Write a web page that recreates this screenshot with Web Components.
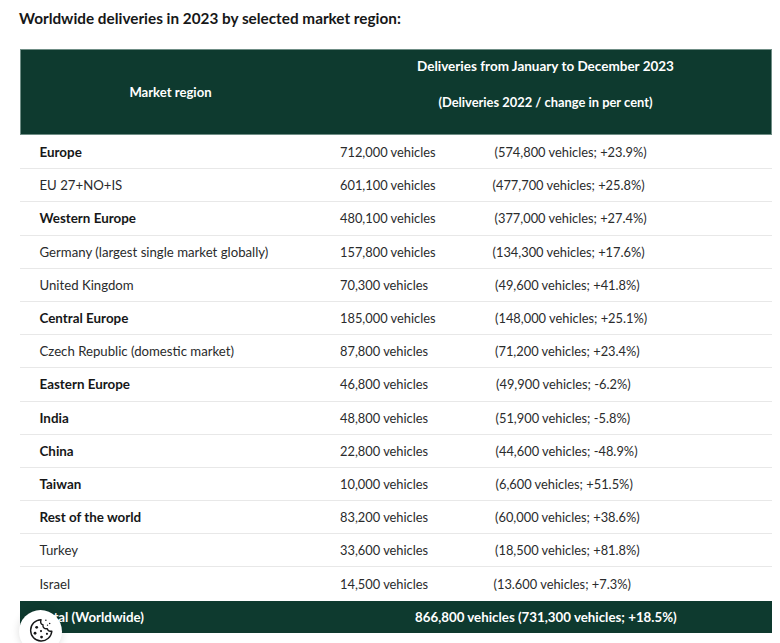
<!DOCTYPE html>
<html>
<head>
<meta charset="utf-8">
<title>Deliveries</title>
<style>
  html, body { margin: 0; padding: 0; background: #fff; overflow: hidden; }
  body { height: 643px; font-family: "Lato", "Liberation Sans", sans-serif; color: #2a2b2c; }
</style>
</head>
<body>
<deliveries-page>
  <span slot="title">Worldwide deliveries in 2023 by selected market region:</span>
  <deliveries-head>
    <span slot="region">Market region</span>
    <span slot="main">Deliveries from January to December 2023</span>
    <span slot="sub">(Deliveries 2022 / change in per cent)</span>
  </deliveries-head>
  <delivery-row strong shift="154.5">Europe<span slot="count">712,000 vehicles</span><span slot="change">(574,800 vehicles; +23.9%)</span></delivery-row>
  <delivery-row shift="152.5">EU 27+NO+IS<span slot="count">601,100 vehicles</span><span slot="change">(477,700 vehicles; +25.8%)</span></delivery-row>
  <delivery-row strong shift="154.5">Western Europe<span slot="count">480,100 vehicles</span><span slot="change">(377,000 vehicles; +27.4%)</span></delivery-row>
  <delivery-row shift="152.5">Germany (largest single market globally)<span slot="count">157,800 vehicles</span><span slot="change">(134,300 vehicles; +17.6%)</span></delivery-row>
  <delivery-row shift="155">United Kingdom<span slot="count">70,300 vehicles</span><span slot="change">(49,600 vehicles; +41.8%)</span></delivery-row>
  <delivery-row strong shift="155">Central Europe<span slot="count">185,000 vehicles</span><span slot="change">(148,000 vehicles; +25.1%)</span></delivery-row>
  <delivery-row shift="155">Czech Republic (domestic market)<span slot="count">87,800 vehicles</span><span slot="change">(71,200 vehicles; +23.4%)</span></delivery-row>
  <delivery-row strong shift="156">Eastern Europe<span slot="count">46,800 vehicles</span><span slot="change">(49,900 vehicles; -6.2%)</span></delivery-row>
  <delivery-row strong shift="155.5">India<span slot="count">48,800 vehicles</span><span slot="change">(51,900 vehicles; -5.8%)</span></delivery-row>
  <delivery-row strong shift="155.5">China<span slot="count">22,800 vehicles</span><span slot="change">(44,600 vehicles; -48.9%)</span></delivery-row>
  <delivery-row strong shift="155.5">Taiwan<span slot="count">10,000 vehicles</span><span slot="change">(6,600 vehicles; +51.5%)</span></delivery-row>
  <delivery-row strong shift="155">Rest of the world<span slot="count">83,200 vehicles</span><span slot="change">(60,000 vehicles; +38.6%)</span></delivery-row>
  <delivery-row shift="155">Turkey<span slot="count">33,600 vehicles</span><span slot="change">(18,500 vehicles; +81.8%)</span></delivery-row>
  <delivery-row shift="153.5" last>Israel<span slot="count">14,500 vehicles</span><span slot="change">(13.600 vehicles; +7.3%)</span></delivery-row>
  <deliveries-total>
    <span slot="label">Total (Worldwide)</span>
    <span slot="value">866,800 vehicles (731,300 vehicles; +18.5%)</span>
  </deliveries-total>
</deliveries-page>
<cookie-button></cookie-button>

<script>
class DeliveriesPage extends HTMLElement {
  constructor() {
    super();
    this.attachShadow({ mode: 'open' });
    this.shadowRoot.innerHTML = `
      <style>
        :host { display: block; padding: 9px 8px 0 20px; font-size: 13px; }
        h2 { margin: 0 0 23px -1px; font-size: 15.3px; line-height: 18px; font-weight: 700; color: #161718; }
      </style>
      <h2><slot name="title"></slot></h2>
      <slot></slot>
    `;
  }
}

class DeliveriesHead extends HTMLElement {
  constructor() {
    super();
    this.attachShadow({ mode: 'open' });
    this.shadowRoot.innerHTML = `
      <style>
        :host {
          display: grid;
          grid-template-columns: 299px 1fr;
          height: 84px;
          box-sizing: border-box;
          margin: 0 1px 2px;
          background: #0e3a2f;
          outline: 1px solid #6f8d85;
          color: #fff;
          font-weight: 700;
          align-items: center;
          text-align: center;
        }
        .region { font-size: 13.1px; }
        .right { display: flex; flex-direction: column; gap: 18px; padding-bottom: 16px; }
        .right div { line-height: 18px; }
        .main { font-size: 13.5px; }
        .sub { font-size: 12.9px; }
      </style>
      <div class="region"><slot name="region"></slot></div>
      <div class="right">
        <div class="main"><slot name="main"></slot></div>
        <div class="sub"><slot name="sub"></slot></div>
      </div>
    `;
  }
}

class DeliveryRow extends HTMLElement {
  constructor() {
    super();
    this.attachShadow({ mode: 'open' });
    this.shadowRoot.innerHTML = `
      <style>
        :host {
          display: grid;
          grid-template-columns: 300.5px 1fr;
          height: 33.2px;
          box-sizing: border-box;
          align-items: center;
          border-bottom: 1.5px solid #e8e8e8;
          padding-left: 19.5px;
          line-height: 18px;
        }
        :host([last]) { border-bottom: 0; }
        .name { font-size: 13.2px; }
        :host([strong]) .name { font-weight: 700; font-size: 13.4px; color: #161718; }
        .vals { display: flex; font-size: 12.85px; }
        .count { flex: none; }
      </style>
      <div class="name"><slot></slot></div>
      <div class="vals">
        <div class="count"><slot name="count"></slot></div>
        <div class="change"><slot name="change"></slot></div>
      </div>
    `;
  }

  connectedCallback() {
    const count = this.shadowRoot.querySelector('.count');
    count.style.width = this.getAttribute('shift') + 'px';
  }
}

class DeliveriesTotal extends HTMLElement {
  constructor() {
    super();
    this.attachShadow({ mode: 'open' });
    this.shadowRoot.innerHTML = `
      <style>
        :host {
          display: grid;
          grid-template-columns: 375.5px 1fr;
          height: 32px;
          align-items: center;
          background: #0e3a2f;
          color: #fff;
          font-weight: 700;
          font-size: 13.3px;
          padding-left: 19.5px;
        }
      </style>
      <div><slot name="label"></slot></div>
      <div><slot name="value"></slot></div>
    `;
  }
}

class CookieButton extends HTMLElement {
  constructor() {
    super();
    this.attachShadow({ mode: 'open' });
    this.shadowRoot.innerHTML = `
      <style>
        :host {
          position: fixed;
          left: 19px;
          top: 610px;
          width: 43px;
          height: 43px;
          border-radius: 50%;
          background: #fff;
          box-shadow: 0 0 8px rgba(0,0,0,0.14);
          display: flex;
          align-items: center;
          justify-content: center;
        }
        svg { width: 26px; height: 26px; margin-top: -3px; }
      </style>
      <svg viewBox="0 0 24 24" fill="none" stroke="#161718" stroke-width="1.3" stroke-linecap="round" stroke-linejoin="round">
        <path d="M12 2.500a9.800 9.800 0 1 0 10 10.500c-2 .6-3.600-.3-4.200-2.300-2.500.5-4.300-1-4-3.500-1.800-.2-2.600-1.900-1.800-4.700z"/>
        <circle cx="8" cy="9.500" r="1.300" fill="#161718" stroke="none"/>
        <circle cx="6.500" cy="15" r="1.300" fill="#161718" stroke="none"/>
        <circle cx="12" cy="13" r="1" fill="#161718" stroke="none"/>
        <circle cx="12.500" cy="18.500" r="1.300" fill="#161718" stroke="none"/>
        <circle cx="17.500" cy="15.500" r="1" fill="#161718" stroke="none"/>
        <circle cx="16.500" cy="3" r=".7" fill="#161718" stroke="none"/>
        <circle cx="20" cy="6" r=".7" fill="#161718" stroke="none"/>
        <circle cx="18" cy="7.500" r=".6" fill="#161718" stroke="none"/>
      </svg>
    `;
  }
}

customElements.define('deliveries-page', DeliveriesPage);
customElements.define('deliveries-head', DeliveriesHead);
customElements.define('delivery-row', DeliveryRow);
customElements.define('deliveries-total', DeliveriesTotal);
customElements.define('cookie-button', CookieButton);
</script>
</body>
</html>
